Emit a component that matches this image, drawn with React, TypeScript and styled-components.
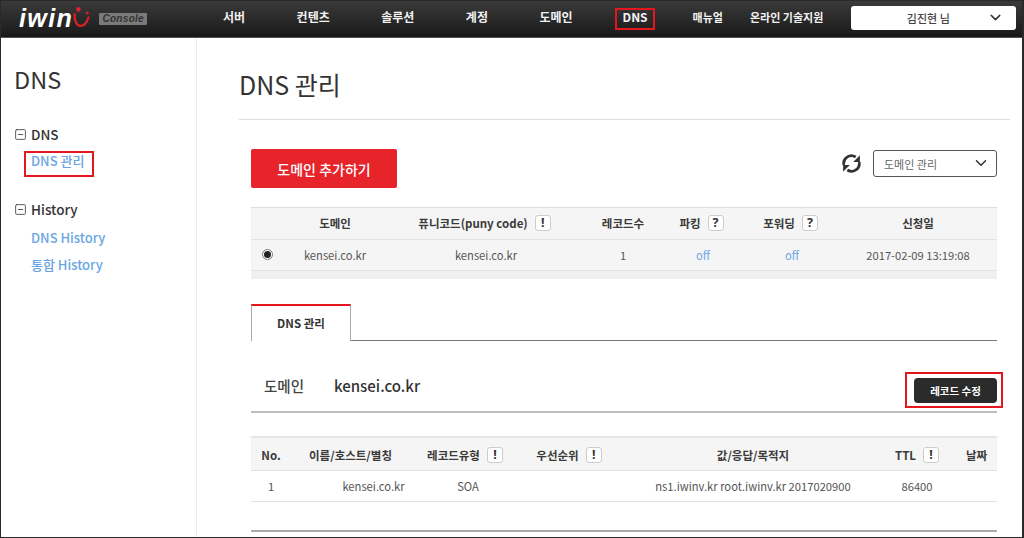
import React from "react";
import styled, { createGlobalStyle } from "styled-components";
import { ChevronDown, SquareMinus } from "lucide-react";

const GlobalStyle = createGlobalStyle`
  html, body { margin: 0; padding: 0; background: #fff; }
  * { box-sizing: border-box; }
  body { font-family: "Noto Sans CJK KR", "Noto Sans", sans-serif; color: #333; }
`;

const Frame = styled.div`
  width: 1024px; height: 538px; overflow: hidden;
  border: 1px solid #2a2a2a; border-right-width: 2px;
  display: flex; flex-direction: column; background: #fff;
`;
const Header = styled.header`
  flex: none; height: 37px; display: flex; align-items: center;
  background: linear-gradient(#3a3a3a, #1e1e1e 85%, #161616);
  border-bottom: 1px solid #555;
`;
const LogoArea = styled.div`
  width: 221px; flex: none; display: flex; align-items: center; padding-left: 18px;
`;
const LogoText = styled.span`
  font-family: "Liberation Sans", sans-serif; font-weight: 700; font-style: italic;
  font-size: 25px; letter-spacing: 1.4px; color: #fff; line-height: 30px; margin-top: -3px;
`;
const LogoSmile = styled.svg`
  width: 18px; height: 22px; margin: -5px 0 0 -1px; flex: none;
`;
const ConsoleBadge = styled.span`
  margin-left: 9px; width: 48px; height: 12px; background: #7a7a7a; border-radius: 1px;
  font-family: "Liberation Sans", sans-serif; font-style: italic; font-weight: 700;
  font-size: 10px; line-height: 12px; color: #333; text-align: center; letter-spacing: .3px;
`;
const Nav = styled.nav`display: flex; align-items: center; margin-left: 1px;`;
const NavItem = styled.a<{ $gap?: number; $small?: boolean }>`
  margin-right: ${p => p.$gap ?? 51.5}px;
  font-size: ${p => (p.$small ? 11 : 12)}px; font-weight: 700; color: #f2f2f2;
  white-space: nowrap; line-height: 16px; position: relative; top: -2px;
`;
const Marked = styled.span<{ $t: number; $r: number; $b: number; $l: number }>`
  position: relative; display: inline-block;
  &::after {
    content: ""; position: absolute; pointer-events: none;
    inset: ${p => -p.$t}px ${p => -p.$r}px ${p => -p.$b}px ${p => -p.$l}px;
    border: 2px solid #e3171d;
  }
`;
const UserBox = styled.div`
  width: 165px; height: 24px; margin-left: 28px; background: #fff; border-radius: 3px;
  display: flex; align-items: center; justify-content: center; position: relative;
  font-size: 11px; font-weight: 500; color: #444; top: -1px; padding-right: 11px;
  svg { position: absolute; right: 12px; top: 3px; color: #333; }
`;

const Body = styled.div`flex: 1; display: flex; min-height: 0;`;
const Sidebar = styled.aside`
  width: 196px; flex: none; border-right: 1px solid #ececec; padding: 25px 0 0 13px;
`;
const SideTitle = styled.h2`
  margin: 0 0 29px; font-size: 23.5px; line-height: 32px; font-weight: 400; color: #333;
`;
const SideGroup = styled.div`margin-bottom: 28px;`;
const GroupHead = styled.div`
  display: flex; align-items: center; gap: 4px; height: 20px;
  font-size: 13.5px; font-weight: 500; color: #333;
  svg { color: #444; }
`;
const SideLink = styled.a<{ $top?: number }>`
  display: block; margin: ${p => p.$top ?? 7}px 0 0 17px; height: 20px; line-height: 20px;
  font-size: 13px; font-weight: 500; color: #6aa5e3; white-space: nowrap;
`;

const Main = styled.main`flex: 1; padding: 0 12px 0 42px; min-width: 0;`;
const PageHead = styled.div`
  height: 82px; padding-top: 29px; border-bottom: 1px solid #ddd;
`;
const PageTitle = styled.h1`
  margin: 0; font-size: 25px; line-height: 34px; font-weight: 400; color: #333;
`;
const Content = styled.div`padding: 0 13px 0 12px;`;
const Toolbar = styled.div`
  margin-top: 29px; height: 39px; display: flex; align-items: flex-start; justify-content: space-between;
`;
const AddButton = styled.button`
  width: 146px; height: 39px; border: 0; border-radius: 2px; background: #e6242a; color: #fff;
  font: 500 14px "Noto Sans CJK KR", sans-serif;
`;
const ToolRight = styled.div`display: flex; align-items: center; gap: 11px; margin-top: 1px;`;
const RefreshIcon = styled.svg`width: 21px; height: 21px; color: #333; flex: none;`;
const Select = styled.div`
  width: 124px; height: 27px; border: 1px solid #555; border-radius: 3px; padding: 0 10px;
  display: flex; align-items: center; justify-content: space-between;
  font-size: 11px; color: #666; svg { color: #333; margin: -2px -4px 0 0; }
`;

const Row = styled.div<{ $cols: string; $h: number; $head?: boolean; $bg?: string; $up?: number; $down?: number }>`
  display: grid; grid-template-columns: ${p => p.$cols}; height: ${p => p.$h}px; align-items: center;
  background: ${p => p.$bg ?? "transparent"};
  border-bottom: 1px solid #e2e2e2;
  padding-bottom: ${p => p.$up ?? 0}px;
  padding-top: ${p => p.$down ?? 0}px;
  font-size: ${p => (p.$head ? 11.5 : 11.2)}px; font-weight: ${p => (p.$head ? 700 : 400)};
  color: ${p => (p.$head ? "#3a3a3a" : "#555")};
`;
const Cell = styled.div<{ $pad?: number; $padR?: number; $link?: boolean }>`
  display: flex; align-items: center; justify-content: center; gap: 7px; white-space: nowrap;
  padding-left: ${p => p.$pad ?? 0}px;
  padding-right: ${p => p.$padR ?? 0}px;
  color: ${p => (p.$link ? "#6aa5e3" : "inherit")};
`;
const Hint = styled.span`
  width: 16px; height: 16px; border: 1px solid #ccc; border-radius: 3px; background: #fff;
  display: inline-flex; align-items: center; justify-content: center;
  font: 700 12.5px "Noto Sans", sans-serif; color: #333;
`;
const Radio = styled.span`
  width: 11px; height: 11px; border-radius: 50%; border: 1px solid #777; background: #fff;
  display: inline-flex; align-items: center; justify-content: center;
  &::before { content: ""; width: 7px; height: 7px; border-radius: 50%; background: #222; }
`;
const Table1 = styled.div`margin-top: 19px; border-top: 1px solid #ddd;`;
const Strip = styled.div`height: 8px; background: #f0f0f0;`;
const Tabs = styled.div`margin-top: 25px; height: 37px; border-bottom: 1px solid #777; display: flex;`;
const Tab = styled.div`
  width: 100px; height: 37px; background: #fff;
  border: 1px solid #aaa; border-top: 2px solid #e3171d; border-bottom: 0;
  display: flex; align-items: center; justify-content: center;
  font-size: 11.5px; font-weight: 700; color: #333; padding-bottom: 1px;
`;
const DomainBar = styled.div`
  height: 72px; border-bottom: 2px solid #bdbdbd; display: flex; align-items: flex-start; padding: 35px 0 0 13px;
`;
const DomainLabel = styled.span`font-size: 14.5px; line-height: 20px; font-weight: 500; color: #444; width: 70px;`;
const DomainName = styled.span`font-size: 15px; line-height: 20px; font-weight: 500; color: #333; flex: 1;`;
const EditMark = styled(Marked)`margin-top: 2px;`;
const EditButton = styled.button`
  width: 83px; height: 25px; border: 0; border-radius: 4px; background: #2b2b2b; color: #fff;
  font: 700 10.5px "Noto Sans CJK KR", sans-serif; padding: 0; display: block;
`;
const Table2 = styled.div`margin-top: 23px; border-top: 2px solid #e6e6e6;`;
const EndLine = styled.div`margin-top: 28px; height: 2px; background: #aaa;`;

const cols1 = "32px 104px 198px 76px 84px 94px 158px";
const cols2 = "40px 119px 110px 98px 270px 58px 51px";
const HEAD_BG = "#f5f5f5";

export default function App() {
  return (
    <>
      <GlobalStyle />
      <Frame>
        <Header>
          <LogoArea>
            <LogoText>iwin</LogoText>
            <LogoSmile viewBox="0 0 18 22" aria-hidden>
              <path d="M2.6 8C2.2 14 4.6 20 8.5 20c3.6 0 6.6-4 8-8.6" fill="none" stroke="#d8222a" strokeWidth="2.2" strokeLinecap="round" />
              <circle cx="6.4" cy="3.4" r="2.3" fill="#d8222a" />
              <circle cx="15.2" cy="7" r="1.5" fill="#d8222a" />
            </LogoSmile>
            <ConsoleBadge>Console</ConsoleBadge>
          </LogoArea>
          <Nav>
            <NavItem>서버</NavItem>
            <NavItem>컨텐츠</NavItem>
            <NavItem>솔루션</NavItem>
            <NavItem>계정</NavItem>
            <NavItem $gap={50}>도메인</NavItem>
            <NavItem $gap={45}><Marked $t={1} $r={7} $b={5} $l={8}>DNS</Marked></NavItem>
            <NavItem $small $gap={27}>매뉴얼</NavItem>
            <NavItem $small $gap={0}>온라인 기술지원</NavItem>
          </Nav>
          <UserBox>김진현 님<ChevronDown size={17} strokeWidth={2} /></UserBox>
        </Header>
        <Body>
          <Sidebar>
            <SideTitle>DNS</SideTitle>
            <SideGroup>
              <GroupHead><SquareMinus size={13} strokeWidth={1.6} />DNS</GroupHead>
              <SideLink><Marked $t={0} $r={10} $b={6} $l={7}>DNS 관리</Marked></SideLink>
            </SideGroup>
            <SideGroup>
              <GroupHead><SquareMinus size={13} strokeWidth={1.6} />History</GroupHead>
              <SideLink $top={9}>DNS History</SideLink>
              <SideLink>통합 History</SideLink>
            </SideGroup>
          </Sidebar>
          <Main>
            <PageHead><PageTitle>DNS 관리</PageTitle></PageHead>
            <Content>
              <Toolbar>
                <AddButton>도메인 추가하기</AddButton>
                <ToolRight>
                  <RefreshIcon viewBox="0 0 20 20" aria-hidden>
                    <path d="M2.7 11.5A7.4 7.4 0 0 1 14 3.8" fill="none" stroke="currentColor" strokeWidth="2.6" />
                    <path d="M17.3 8.5A7.4 7.4 0 0 1 6 16.2" fill="none" stroke="currentColor" strokeWidth="2.6" />
                    <path d="M18 2.2V8.6H11.6Z" fill="currentColor" />
                    <path d="M2 17.8V11.4H8.4Z" fill="currentColor" />
                  </RefreshIcon>
                  <Select>도메인 관리<ChevronDown size={18} strokeWidth={2} /></Select>
                </ToolRight>
              </Toolbar>
              <Table1>
                <Row $cols={cols1} $h={32} $head $bg={HEAD_BG} $up={2}>
                  <Cell />
                  <Cell>도메인</Cell>
                  <Cell $padR={3}>퓨니코드(puny code)<Hint>!</Hint></Cell>
                  <Cell>레코드수</Cell>
                  <Cell $padR={3}>파킹<Hint>?</Hint></Cell>
                  <Cell $padR={3}>포워딩<Hint>?</Hint></Cell>
                  <Cell>신청일</Cell>
                </Row>
                <Row $cols={cols1} $h={31} $bg={HEAD_BG} $up={1}>
                  <Cell><Radio /></Cell>
                  <Cell>kensei.co.kr</Cell>
                  <Cell>kensei.co.kr</Cell>
                  <Cell>1</Cell>
                  <Cell $link>off</Cell>
                  <Cell $link>off</Cell>
                  <Cell>2017-02-09 13:19:08</Cell>
                </Row>
                <Strip />
              </Table1>
              <Tabs><Tab>DNS 관리</Tab></Tabs>
              <DomainBar>
                <DomainLabel>도메인</DomainLabel>
                <DomainName>kensei.co.kr</DomainName>
                <EditMark $t={6} $r={6} $b={5} $l={9}><EditButton>레코드 수정</EditButton></EditMark>
              </DomainBar>
              <Table2>
                <Row $cols={cols2} $h={33} $head $bg={HEAD_BG} $down={1}>
                  <Cell>No.</Cell>
                  <Cell>이름/호스트/별칭</Cell>
                  <Cell>레코드유형<Hint>!</Hint></Cell>
                  <Cell>우선순위<Hint>!</Hint></Cell>
                  <Cell>값/응답/목적지</Cell>
                  <Cell>TTL<Hint>!</Hint></Cell>
                  <Cell $pad={10}>날짜</Cell>
                </Row>
                <Row $cols={cols2} $h={31} $up={1}>
                  <Cell>1</Cell>
                  <Cell $pad={46}>kensei.co.kr</Cell>
                  <Cell $pad={6}>SOA</Cell>
                  <Cell />
                  <Cell>ns1.iwinv.kr root.iwinv.kr 2017020900</Cell>
                  <Cell>86400</Cell>
                  <Cell />
                </Row>
              </Table2>
              <EndLine />
            </Content>
          </Main>
        </Body>
      </Frame>
    </>
  );
}
